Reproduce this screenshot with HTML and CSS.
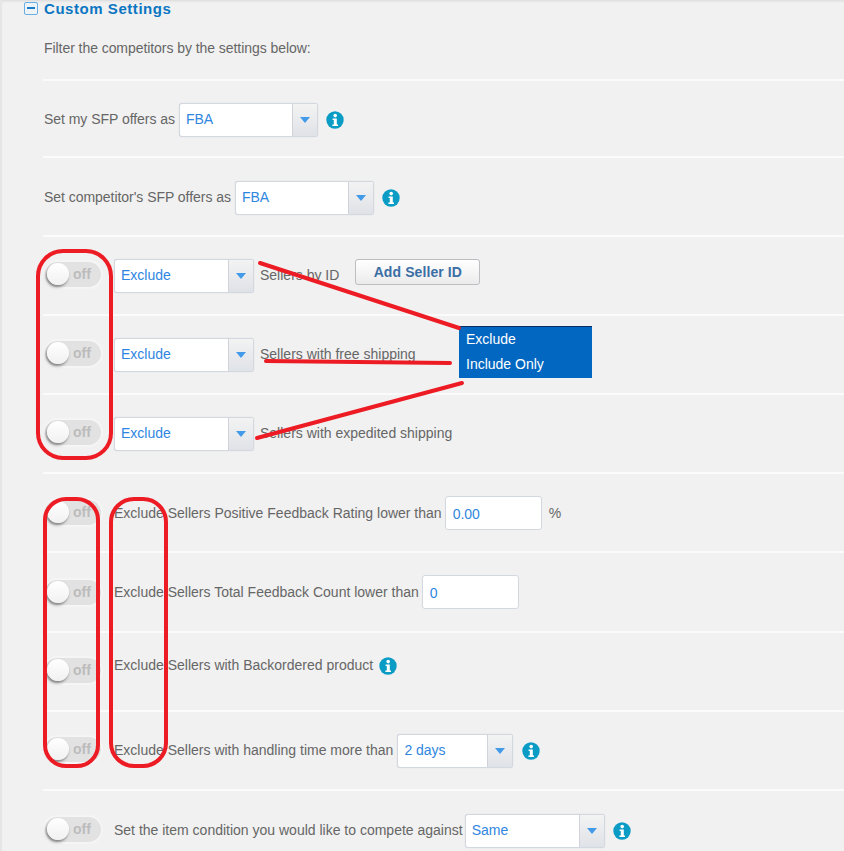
FILE: index.html
```html
<!DOCTYPE html>
<html lang="en">
<head>
<meta charset="utf-8">
<title>Custom Settings</title>
<link rel="stylesheet" href="styles.css">
</head>
<body>
<svg width="0" height="0" class="defs" aria-hidden="true">
  <symbol id="info" viewBox="0 0 18 18">
    <circle cx="9" cy="9" r="8.7" fill="#0b9cc6"/>
    <circle cx="9.2" cy="4.6" r="1.8" fill="#fff"/>
    <path d="M6.6 7.4h4.2v6h1.2v1.6H6.4v-1.6h1.4V9H6.6z" fill="#fff"/>
  </symbol>
</svg>
<main class="page">
  <h2 class="heading"><span class="collapse"></span>Custom Settings</h2>
  <section class="settings">
    <p class="intro">Filter the competitors by the settings below:</p>

    <div class="row plain first">
      <span>Set my SFP offers as</span>
      <div class="select w139"><span class="value">FBA</span><span class="arrow"></span></div>
      <svg class="info"><use href="#info"/></svg>
    </div>

    <div class="row plain">
      <span>Set competitor's SFP offers as</span>
      <div class="select w139"><span class="value">FBA</span><span class="arrow"></span></div>
      <svg class="info"><use href="#info"/></svg>
    </div>

    <div class="row tight">
      <div class="toggle"><span class="knob"></span><span class="off">off</span></div>
      <div class="select w140"><span class="value">Exclude</span><span class="arrow"></span></div>
      <span>Sellers by ID</span>
      <button class="btn">Add Seller ID</button>
    </div>

    <div class="row tight">
      <div class="toggle"><span class="knob"></span><span class="off">off</span></div>
      <div class="select w140"><span class="value">Exclude</span><span class="arrow"></span></div>
      <span>Sellers with free shipping</span>
    </div>

    <div class="row tight">
      <div class="toggle"><span class="knob"></span><span class="off">off</span></div>
      <div class="select w140"><span class="value">Exclude</span><span class="arrow"></span></div>
      <span>Sellers with expedited shipping</span>
    </div>

    <div class="row tight low">
      <div class="toggle"><span class="knob"></span><span class="off">off</span></div>
      <span>Exclude Sellers Positive Feedback Rating lower than</span>
      <div class="input w97">0.00</div>
      <span class="pct">%</span>
    </div>

    <div class="row tight wide low">
      <div class="toggle"><span class="knob"></span><span class="off">off</span></div>
      <span>Exclude Sellers Total Feedback Count lower than</span>
      <div class="input w97">0</div>
    </div>

    <div class="row tight">
      <div class="toggle"><span class="knob"></span><span class="off">off</span></div>
      <span class="raised">Exclude Sellers with Backordered product</span>
      <svg class="info raised near"><use href="#info"/></svg>
    </div>

    <div class="row tight">
      <div class="toggle"><span class="knob"></span><span class="off">off</span></div>
      <span>Exclude Sellers with handling time more than</span>
      <div class="select w116"><span class="value">2 days</span><span class="arrow"></span></div>
      <svg class="info"><use href="#info"/></svg>
    </div>

    <div class="row tight last">
      <div class="toggle"><span class="knob"></span><span class="off">off</span></div>
      <span>Set the item condition you would like to compete against</span>
      <div class="select w140b"><span class="value">Same</span><span class="arrow"></span></div>
      <svg class="info"><use href="#info"/></svg>
    </div>
  </section>
</main>

<div class="popup">
  <div>Exclude</div>
  <div>Include Only</div>
</div>

<svg class="marks" width="844" height="851" viewBox="0 0 844 851" aria-hidden="true">
  <rect x="38" y="251" width="73" height="207" rx="25"/>
  <rect x="45" y="499" width="53" height="267" rx="21"/>
  <rect x="111" y="499" width="55" height="267" rx="23"/>
  <path d="M260 263 L459 328"/>
  <path d="M266 361 L450 363"/>
  <path d="M462 383 L257 438"/>
</svg>
</body>
</html>
```
FILE: styles.css
```css
* { box-sizing: border-box; }
html, body { margin: 0; padding: 0; }
body {
  width: 844px;
  height: 851px;
  overflow: hidden;
  position: relative;
  background: #f1f1f1;
  font-family: "Liberation Sans", Arial, sans-serif;
  font-size: 14px;
  color: #666;
}
.defs { position: absolute; }
.page {
  height: 851px;
  border-left: 2px solid #e6e6e6;
  box-shadow: inset 0 3px 3px -2px #d8d8d8;
  overflow: hidden;
}
.heading {
  margin: 0;
  height: 16px;
  padding-left: 22px;
  display: flex;
  align-items: center;
  gap: 6px;
  font-size: 15px;
  font-weight: bold;
  letter-spacing: 0.55px;
  color: #0b76c2;
}
.collapse {
  width: 14px;
  height: 13px;
  border: 1px solid #6aaee6;
  border-radius: 2px;
  background: #eef3f8;
  display: flex;
  align-items: center;
  justify-content: center;
}
.collapse::before {
  content: "";
  width: 8px;
  height: 2px;
  background: #1b7cc8;
}
.settings { margin-left: 41px; }
.intro {
  margin: 0;
  height: 65px;
  padding: 24px 0 0 1px;
  line-height: 16px;
  border-bottom: 2px solid #fbfbfb;
  letter-spacing: -0.06px;
}
.row {
  height: 79px;
  display: flex;
  align-items: center;
  border-bottom: 2px solid #fbfbfb;
}
.row > span { padding-bottom: 2px; }
.plain {
  gap: 4px;
  padding: 3px 0 0 1px;
  letter-spacing: -0.04px;
}
.first { height: 77px; }
.tight { gap: 13px; padding-left: 2px; }
.wide { height: 80px; }
.last { border-bottom: 0; }
.low > span { padding-bottom: 0; }
.low .toggle { margin-bottom: 0; }
.raised { position: relative; top: -6px; }
.select {
  height: 34px;
  display: flex;
  background: #fff;
  border: 1px solid #d3d7e0;
  border-radius: 3px;
  box-shadow: 0 0 1px #c9ccd4;
  color: #2f86e0;
  font-size: 14px;
  letter-spacing: 0;
}
.w139 { width: 139px; }
.w140 { width: 140px; margin-right: -7px; }
.w140b { width: 140px; margin-left: -11px; margin-right: -1px; }
.w116 { width: 116px; margin-left: -9px; }
.value { flex: 1; padding-left: 6px; line-height: 30px; }
.arrow {
  width: 25px;
  border-left: 1px solid #d0d3da;
  background: linear-gradient(#f3f3f3, #dfe2e7);
  display: flex;
  align-items: center;
  justify-content: center;
}
.arrow::before {
  content: "";
  border-left: 5.5px solid transparent;
  border-right: 5.5px solid transparent;
  border-top: 6px solid #429ae8;
}
.info { width: 18px; height: 18px; flex: none; margin-left: 4px; }
.tight .info { margin-left: -4px; }
.tight .near { margin-left: -7px; }
.toggle {
  width: 56px;
  height: 25px;
  flex: none;
  margin-bottom: 2px;
  position: relative;
  border-radius: 13px;
  background: #e2e2e2;
  box-shadow: 0 0 0 2px #f5f5f5;
}
.knob {
  position: absolute;
  left: 2px;
  top: 1px;
  width: 22px;
  height: 22px;
  border-radius: 50%;
  background: linear-gradient(#ffffff, #f1f1f1);
  box-shadow: -1px 2px 3px #7f7f7f;
}
.off {
  position: absolute;
  left: 28px;
  top: 4px;
  font-size: 14px;
  font-weight: bold;
  line-height: 17px;
  color: #bcbcbc;
}
.btn {
  width: 125px;
  height: 26px;
  margin: -8px 0 0 3px;
  padding: 0;
  border: 1px solid #bdbdc2;
  border-radius: 3px;
  background: linear-gradient(#ffffff, #ebebeb);
  color: #3a6ea5;
  font: bold 14px "Liberation Sans", Arial, sans-serif;
  letter-spacing: 0.1px;
}
.input {
  height: 34px;
  background: #fff;
  border: 1px solid #d3d7e0;
  border-radius: 3px;
  padding-left: 7px;
  line-height: 34px;
  color: #2f86e0;
}
.w97 { width: 97px; margin-left: -10px; }
.pct { margin-left: -6px; }
.popup {
  position: absolute;
  left: 459px;
  top: 326px;
  width: 133px;
  height: 52px;
  padding: 0 7px;
  background: #0267c1;
  border-top: 1px solid #0b2f63;
  color: #fff;
  font-size: 14px;
  line-height: 25px;
}
.marks {
  position: absolute;
  left: 0;
  top: 0;
  pointer-events: none;
}
.marks rect, .marks path {
  fill: none;
  stroke: #ed1c24;
  stroke-width: 4;
  stroke-linecap: round;
}
```
